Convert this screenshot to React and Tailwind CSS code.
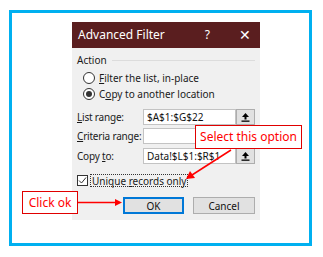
import React from "react";

const font = { fontFamily: '"Noto Sans", "Open Sans", sans-serif' };

function UploadButton() {
  return (
    <div className="w-[19px] h-full bg-[#e1e1e1] border border-[#adadad] flex items-center justify-center">
      <svg width="9" height="10" viewBox="0 0 9 10">
        <path d="M4.5 1 L8 5 L5.5 5 L5.5 7.5 L3.5 7.5 L3.5 5 L1 5 Z" fill="#000" />
        <rect x="0.5" y="8.5" width="8" height="1.3" fill="#000" />
      </svg>
    </div>
  );
}

function Field({ label, value, hasButton = true }) {
  return (
    <div className="flex items-center h-[16px]">
      <div className="w-[69px] whitespace-nowrap text-[10px] tracking-[-0.2px] text-[#1a1a1a] leading-none">{label}</div>
      <div className="flex h-full">
        <div className="w-[93px] h-full bg-white border border-[#c3c3c3] flex items-center px-[3px] whitespace-nowrap text-[10px] leading-none text-[#111]">
          {value}
        </div>
        {hasButton ? <UploadButton /> : <div className="w-[19px]" />}
      </div>
    </div>
  );
}

function Radio({ checked, children }) {
  return (
    <div className="flex items-center h-[16px] pl-[6px] gap-[4px]">
      <div className="w-[12px] h-[12px] rounded-full border border-[#333] bg-white flex items-center justify-center">
        {checked && <div className="w-[6px] h-[6px] rounded-full bg-[#333]" />}
      </div>
      <span className="text-[10px] whitespace-nowrap leading-none text-[#1a1a1a]">{children}</span>
    </div>
  );
}

export default function App() {
  return (
    <div className="relative w-[323px] h-[257px] bg-white pt-[10px] pl-[9px]" style={font}>
      <div className="w-[303px] h-[236px] border-[3px] border-[#00b0f0] pt-[9px] pl-[60px]">
        <div className="w-[188px] h-[198px] bg-[#f0f0f0] flex flex-col">
          <div className="h-[26px] bg-[#5a1e1f] flex items-center pl-[6px] text-white">
            <span className="text-[12px] leading-none">Advanced Filter</span>
            <span className="ml-auto text-[12px] leading-none mr-[29px]">?</span>
            <span className="text-[14px] leading-none mr-[9px]">✕</span>
          </div>
          <div className="flex flex-col px-[5px] pt-[5px]">
            <div className="flex items-center h-[14px] gap-[5px]">
              <span className="text-[10px] leading-none text-[#1a1a1a]">Action</span>
              <div className="flex-1 h-px bg-[#dcdcdc]" />
            </div>
            <div className="mt-[3px]">
              <Radio>
                <span className="underline">F</span>ilter the list, in-place
              </Radio>
              <Radio checked>
                C<span className="underline">o</span>py to another location
              </Radio>
            </div>
            <div className="mt-[7px] flex flex-col gap-[3px]">
              <Field label={<><span className="underline">L</span>ist range:</>} value="$A$1:$G$22" />
              <Field label={<><span className="underline">C</span>riteria range:</>} value="" hasButton={false} />
              <div className="mt-[1px]">
                <Field label={<>Copy <span className="underline">t</span>o:</>} value="Data!$L$1:$R$1" />
              </div>
            </div>
            <div className="mt-[10px] flex items-center h-[13px]">
              <div className="w-[11px] h-[11px] border border-[#333] bg-white flex items-center justify-center">
                <svg width="9" height="9" viewBox="0 0 9 9">
                  <path d="M1 4.5 L3.5 7 L8 1.5" stroke="#333" strokeWidth="1" fill="none" />
                </svg>
              </div>
              <div className="ml-[2px] h-[13px] border border-dotted border-[#333] flex items-center px-[1px]">
                <span className="text-[10px] whitespace-nowrap leading-none text-[#1a1a1a]">
                  Unique <span className="underline">r</span>ecords only
                </span>
              </div>
            </div>
            <div className="mt-[10px] flex h-[17px] pl-[46px] gap-[9px]">
              <div className="w-[62px] h-full bg-[#e1e1e1] border-2 border-[#0078d7] flex items-center justify-center text-[10px] leading-none text-[#111]">
                OK
              </div>
              <div className="w-[63px] h-full bg-[#e1e1e1] border border-[#adadad] flex items-center justify-center text-[10px] leading-none text-[#111]">
                Cancel
              </div>
            </div>
          </div>
        </div>
      </div>

      {/* callouts */}
      <div className="absolute left-[195px] top-[125px] w-[107px] h-[24px] bg-white border border-[#e00000] flex items-center justify-center text-[12px] leading-none text-[#ff0000]">
        Select this option
      </div>
      <div className="absolute left-[22px] top-[191px] w-[56px] h-[23px] bg-white border border-[#e00000] flex items-center justify-center text-[12px] leading-none text-[#ff0000]">
        Click ok
      </div>
      <svg className="absolute left-0 top-0" width="323" height="257">
        <line x1="231" y1="150" x2="192" y2="175" stroke="#ff0000" strokeWidth="1.5" />
        <path d="M186 179 L190 171 L195 178 Z" fill="#ff0000" />
        <line x1="78" y1="202.5" x2="116" y2="202.5" stroke="#ff0000" strokeWidth="1.5" />
        <path d="M122 202.5 L115 199 L115 206 Z" fill="#ff0000" />
      </svg>
    </div>
  );
}
